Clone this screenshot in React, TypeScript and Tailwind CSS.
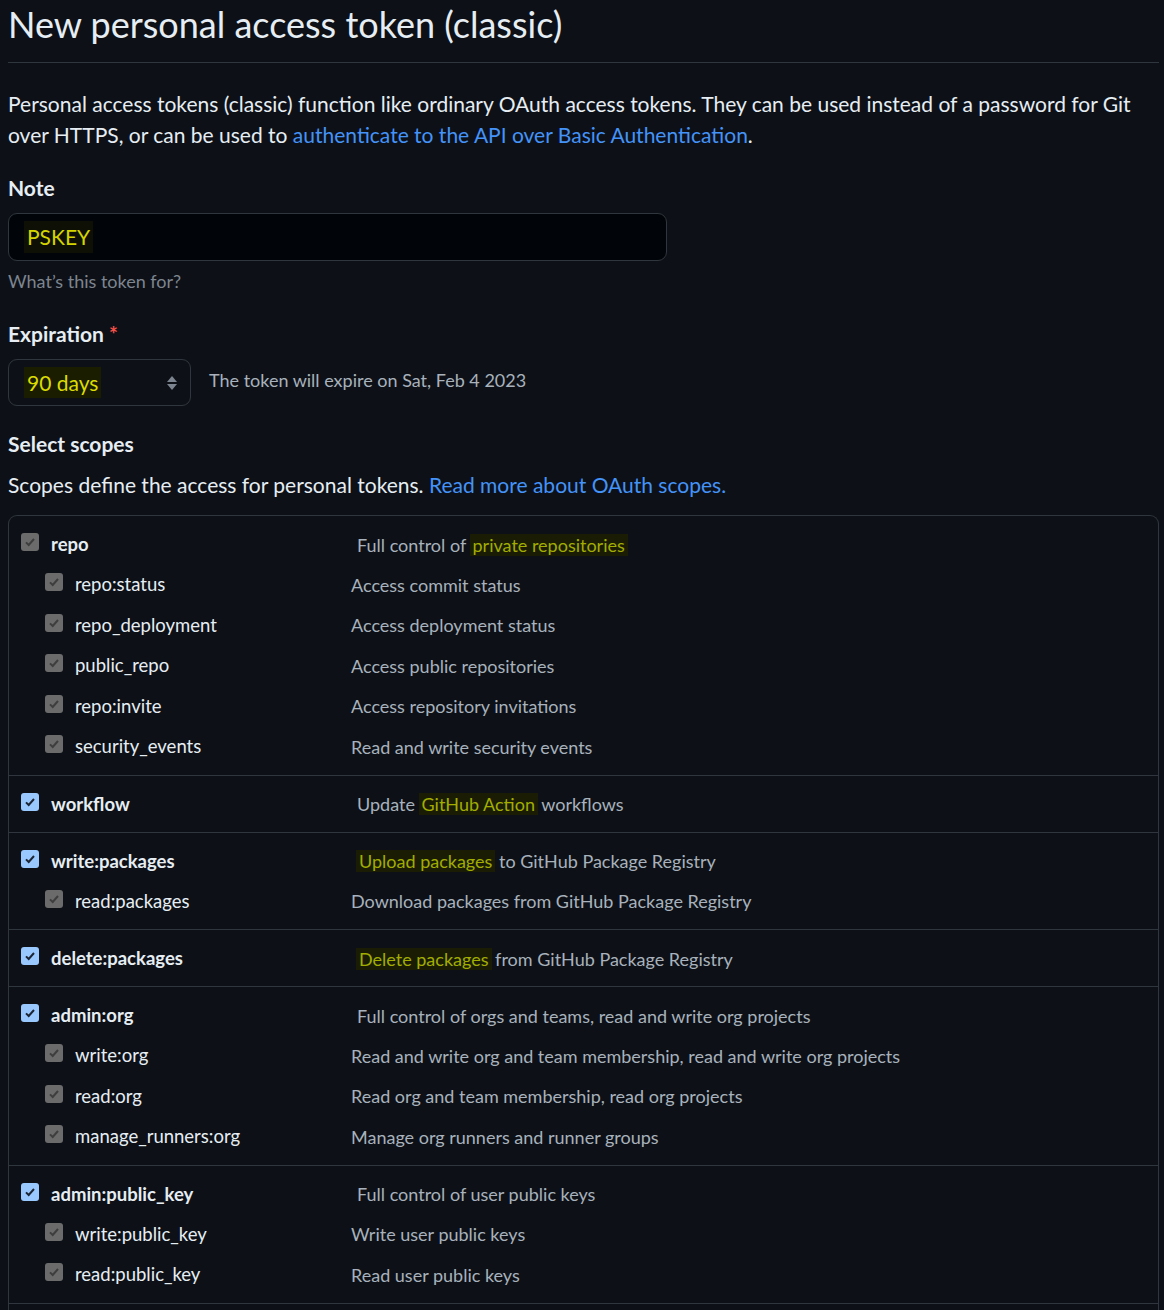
import React from "react";

type Scope = {
  name: string;
  desc: React.ReactNode;
  checked: boolean;
  children?: { name: string; desc: string }[];
};

const mark = (t: string) => (
  <span className="bg-[#1a1d04] px-[3px] -mx-[1px] text-[#a2ad00]">{t}</span>
);

const scopes: Scope[] = [
  {
    name: "repo",
    checked: false,
    desc: <>Full control of {mark("private repositories")}&nbsp;&nbsp;</>,
    children: [
      { name: "repo:status", desc: "Access commit status" },
      { name: "repo_deployment", desc: "Access deployment status" },
      { name: "public_repo", desc: "Access public repositories" },
      { name: "repo:invite", desc: "Access repository invitations" },
      { name: "security_events", desc: "Read and write security events" },
    ],
  },
  {
    name: "workflow",
    checked: true,
    desc: <>Update {mark("GitHub Action")} workflows</>,
  },
  {
    name: "write:packages",
    checked: true,
    desc: <>{mark("Upload packages")} to GitHub Package Registry</>,
    children: [{ name: "read:packages", desc: "Download packages from GitHub Package Registry" }],
  },
  {
    name: "delete:packages",
    checked: true,
    desc: <>{mark("Delete packages")} from GitHub Package Registry</>,
  },
  {
    name: "admin:org",
    checked: true,
    desc: "Full control of orgs and teams, read and write org projects",
    children: [
      { name: "write:org", desc: "Read and write org and team membership, read and write org projects" },
      { name: "read:org", desc: "Read org and team membership, read org projects" },
      { name: "manage_runners:org", desc: "Manage org runners and runner groups" },
    ],
  },
  {
    name: "admin:public_key",
    checked: true,
    desc: "Full control of user public keys",
    children: [
      { name: "write:public_key", desc: "Write user public keys" },
      { name: "read:public_key", desc: "Read user public keys" },
    ],
  },
];

function Check({ active }: { active: boolean }) {
  return (
    <span
      className={
        "flex h-[18px] w-[18px] shrink-0 items-center justify-center rounded-[3px] -translate-y-[3px] " +
        (active ? "bg-[#99c8ff]" : "bg-[#6b6b6b]")
      }
    >
      <svg width="12" height="12" viewBox="0 0 12 12">
        <path
          d="M2 6.4 L4.7 9 L10 3"
          fill="none"
          stroke={active ? "#1b2533" : "#3e3e3e"}
          strokeWidth="2"
        />
      </svg>
    </span>
  );
}

function ScopeGroup({ scope, first }: { scope: Scope; first: boolean }) {
  return (
    <div className={"pt-[9px] pb-[7px] " + (first ? "" : "border-t border-[#30363d]")}>
      <div className="flex h-[40px] items-center pl-[12px]">
        <Check active={scope.checked} />
        <div className="w-[318px] shrink-0 pl-[12px] font-bold text-[18.5px] text-[#e6edf3]">{scope.name}</div>
        <div className="text-[18px] text-[#a8b1bc]">{scope.desc}</div>
      </div>
      {scope.children?.map((c) => (
        <div key={c.name} className="flex h-[40.5px] items-center pl-[36px]">
          <Check active={false} />
          <div className="w-[288px] shrink-0 pl-[12px] text-[18.5px] text-[#e6edf3]">{c.name}</div>
          <div className="text-[18px] text-[#a8b1bc]">{c.desc}</div>
        </div>
      ))}
    </div>
  );
}

export default function App() {
  return (
    <div className="min-h-[1310px] bg-[#0d1117] pl-2 pr-[5px] text-[#e6edf3] font-['Lato','Noto_Sans',sans-serif]">
      <div className="border-b border-[#30363d] pb-[14px]">
        <h1 className="text-[36px] font-normal leading-[48px] text-[#e6edf3]">New personal access token (classic)</h1>
      </div>

      <p className="mt-[25px] text-[21px] leading-[31px] text-[#e6edf3]">
        Personal access tokens (classic) function like ordinary OAuth access tokens. They can be used instead of a password for Git
        over HTTPS, or can be used to <a className="text-[#4493f8]">authenticate to the API over Basic Authentication</a>.
      </p>

      <div className="mt-[23px] text-[21px] font-bold leading-[30px]">Note</div>
      <div className="mt-[10px] flex h-[48px] w-[659px] items-center rounded-[9px] border border-[#30363d] bg-[#010409] pl-[15px]">
        <span className="bg-[#0e1005] px-[3px] text-[21px] text-[#d4d400]">PSKEY</span>
      </div>
      <div className="mt-[7px] text-[18px] leading-[27px] text-[#7d8590]">What’s this token for?</div>

      <div className="mt-[24px] text-[21px] font-bold leading-[30px]">
        Expiration <span className="text-[#f85149]">*</span>
      </div>
      <div className="mt-[10px] flex items-center">
        <div className="flex h-[47px] w-[183px] items-center justify-between rounded-[9px] border border-[#30363d] bg-[#0d1117] pl-[15px] pr-[12px]">
          <span className="bg-[#1a1d00] px-[3px] text-[21px] text-[#dcdc00]">90 days</span>
          <svg width="12" height="18" viewBox="0 0 12 18">
            <path d="M6 2 L11 8 H1 Z" fill="#7d8590" />
            <path d="M6 16 L11 10 H1 Z" fill="#7d8590" />
          </svg>
        </div>
        <div className="ml-[18px] -translate-y-[2px] text-[18px] text-[#a8b1bc]">The token will expire on Sat, Feb 4 2023</div>
      </div>

      <div className="mt-[23px] text-[21px] font-bold leading-[30px]">Select scopes</div>
      <p className="mt-[10px] text-[21px] leading-[31px]">
        Scopes define the access for personal tokens. <a className="text-[#4493f8]">Read more about OAuth scopes.</a>
      </p>

      <div className="mt-[15px] rounded-t-[9px] border border-b-0 border-[#30363d]">
        {scopes.map((s, i) => (
          <ScopeGroup key={s.name} scope={s} first={i === 0} />
        ))}
        <div className="h-[40px] border-t border-[#30363d]" />
      </div>
    </div>
  );
}
